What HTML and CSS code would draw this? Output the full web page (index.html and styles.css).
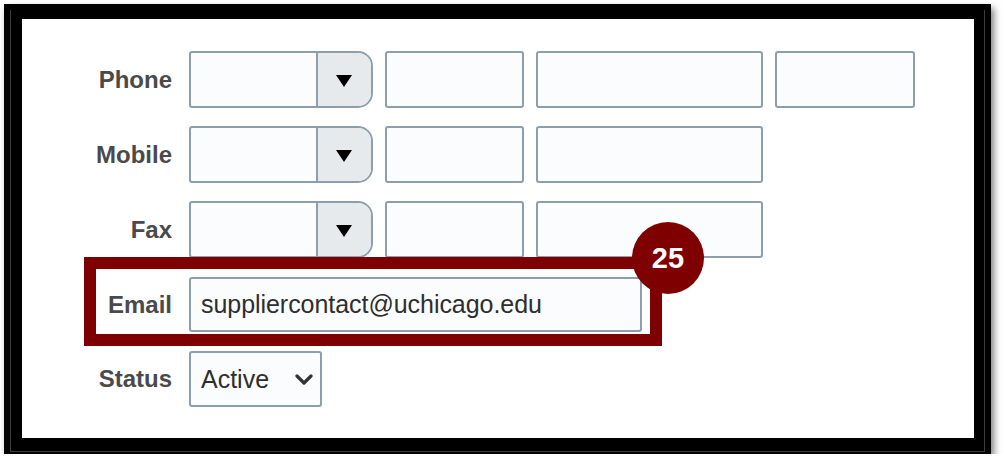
FILE: index.html
```html
<!DOCTYPE html>
<html>
<head>
<meta charset="utf-8">
<link rel="stylesheet" href="styles.css">
</head>
<body>
<div class="frame">
  <div class="content">
    <div class="row r1">
      <div class="label">Phone</div>
      <div class="fields">
        <div class="combo"><div class="combo-text"></div><div class="combo-btn"><span class="tri"></span></div></div>
        <div class="box w139"></div>
        <div class="box w227"></div>
        <div class="box w140"></div>
      </div>
    </div>
    <div class="row r2">
      <div class="label">Mobile</div>
      <div class="fields">
        <div class="combo"><div class="combo-text"></div><div class="combo-btn"><span class="tri"></span></div></div>
        <div class="box w139"></div>
        <div class="box w227"></div>
      </div>
    </div>
    <div class="row r3">
      <div class="label">Fax</div>
      <div class="fields">
        <div class="combo"><div class="combo-text"></div><div class="combo-btn"><span class="tri"></span></div></div>
        <div class="box w139"></div>
        <div class="box w227"></div>
      </div>
    </div>
    <div class="row r4">
      <div class="label">Email</div>
      <div class="fields">
        <div class="box email">suppliercontact@uchicago.edu</div>
      </div>
    </div>
    <div class="row r5">
      <div class="label">Status</div>
      <div class="fields">
        <div class="box status"><span>Active</span>
          <svg class="chev" width="18" height="12" viewBox="0 0 18 12"><path d="M2 2 L9 9 L16 2" fill="none" stroke="#333" stroke-width="3.2" stroke-linecap="round" stroke-linejoin="round"/></svg>
        </div>
      </div>
    </div>
    <div class="highlight"></div>
    <div class="badge">25</div>
  </div>
</div>
</body>
</html>
```
FILE: styles.css
```css
html, body {
  margin: 0;
  padding: 0;
  background: #ffffff;
}
.frame {
  position: relative;
  margin: 4px 0 0 4px;
  width: 952px;
  height: 419px;
  border-style: solid;
  border-color: #000000;
  border-width: 15px 17px 16px 18px;
  background: #ffffff;
  box-shadow: 3px 4px 7px rgba(0, 0, 0, 0.5);
}
.frame::before {
  content: "";
  position: absolute;
  left: -12px;
  top: -9px;
  right: -11px;
  bottom: -14px;
  border-left: 1px solid #3c3c3c;
  border-right: 1px solid #3c3c3c;
  border-bottom: 1px solid #3c3c3c;
  pointer-events: none;
}
.content {
  position: relative;
  height: 100%;
  padding-top: 32px;
  box-sizing: border-box;
  font-family: "Liberation Sans", Arial, sans-serif;
}
.row {
  display: flex;
  align-items: center;
  height: 57px;
  margin-bottom: 18px;
}
.r3 { margin-bottom: 19px; }
.r4 { height: 55px; margin-bottom: 19px; }
.r5 { height: 56px; }
.label {
  width: 150px;
  margin-right: 17px;
  text-align: right;
  font-size: 24px;
  font-weight: bold;
  color: #4a4a4a;
}
.fields {
  display: flex;
  gap: 12px;
  height: 100%;
}
.combo {
  display: flex;
  width: 184px;
  height: 100%;
  box-sizing: border-box;
  border: 2px solid #8e9fab;
  border-radius: 3px 15px 15px 3px;
  background: #fbfcfe;
  overflow: hidden;
}
.combo-text {
  width: 125px;
  border-right: 2px solid #8e9fab;
}
.combo-btn {
  flex: 1;
  background: #e7eaed;
  display: flex;
  align-items: center;
  justify-content: center;
}
.tri {
  width: 0;
  height: 0;
  border-left: 8px solid transparent;
  border-right: 8px solid transparent;
  border-top: 12px solid #000000;
  margin-left: -2px;
  margin-top: 2px;
}
.box {
  height: 100%;
  box-sizing: border-box;
  border: 2px solid #8e9fab;
  border-radius: 3px;
  background: #fbfcfe;
}
.w139 { width: 139px; }
.w227 { width: 227px; }
.w140 { width: 140px; }
.email {
  width: 453px;
  display: flex;
  align-items: center;
  padding-left: 10px;
  font-size: 25px;
  letter-spacing: -0.05px;
  color: #2e2e2e;
}
.status {
  width: 133px;
  display: flex;
  align-items: center;
  justify-content: space-between;
  padding: 0 7px 0 10px;
  font-size: 25px;
  color: #2e2e2e;
}
.chev {
  margin-top: 2px;
}
.highlight {
  position: absolute;
  left: 62px;
  top: 238px;
  width: 578px;
  height: 89px;
  box-sizing: border-box;
  border: 12px solid #7f0000;
}
.badge {
  position: absolute;
  left: 610px;
  top: 203px;
  width: 72px;
  height: 72px;
  border-radius: 50%;
  background: #7f0000;
  color: #ffffff;
  font-size: 29px;
  font-weight: bold;
  display: flex;
  align-items: center;
  justify-content: center;
}
```
